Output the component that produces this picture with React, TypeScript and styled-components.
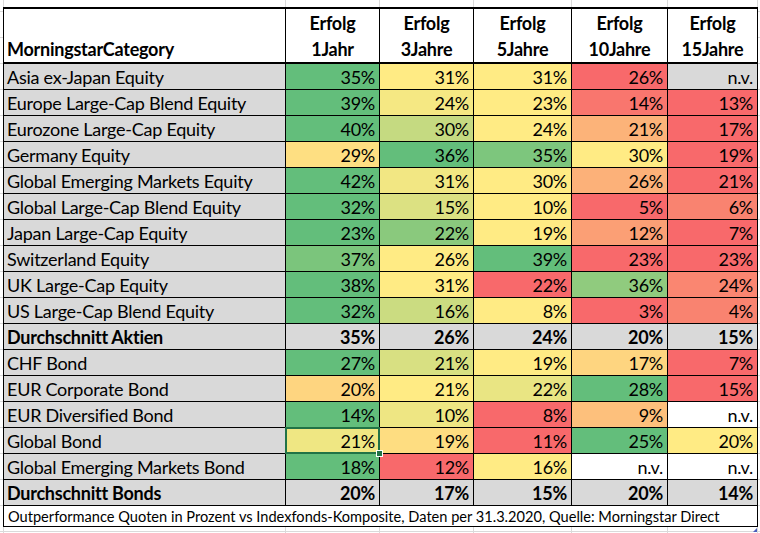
import styled, { createGlobalStyle } from 'styled-components';

const GlobalStyle = createGlobalStyle`
  html, body {
    margin: 0;
    padding: 0;
    background: #fff;
  }
  body {
    font-family: Lato, 'Open Sans', sans-serif;
    color: #000;
  }
`;

type Row = {
  name: string;
  values: (number | null)[];
  // unrounded values where the rounding changes the colour noticeably
  exact?: (number | null)[];
  avg?: boolean;
  grayNa?: boolean;
};

const rows: Row[] = [
  { name: 'Asia ex-Japan Equity', values: [35, 31, 31, 26, null], grayNa: true },
  { name: 'Europe Large-Cap Blend Equity', values: [39, 24, 23, 14, 13] },
  { name: 'Eurozone Large-Cap Equity', values: [40, 30, 24, 21, 17] },
  { name: 'Germany Equity', values: [29, 36, 35, 30, 19] },
  { name: 'Global Emerging Markets Equity', values: [42, 31, 30, 26, 21] },
  { name: 'Global Large-Cap Blend Equity', values: [32, 15, 10, 5, 6] },
  { name: 'Japan Large-Cap Equity', values: [23, 22, 19, 12, 7] },
  { name: 'Switzerland Equity', values: [37, 26, 39, 23, 23] },
  { name: 'UK Large-Cap Equity', values: [38, 31, 22, 36, 24] },
  { name: 'US Large-Cap Blend Equity', values: [32, 16, 8, 3, 4] },
  { name: 'Durchschnitt Aktien', values: [35, 26, 24, 20, 15], avg: true },
  { name: 'CHF Bond', values: [27, 21, 19, 17, 7] },
  { name: 'EUR Corporate Bond', values: [20, 21, 22, 28, 15] },
  { name: 'EUR Diversified Bond', values: [14, 10, 8, 9, null] },
  { name: 'Global Bond', values: [21, 19, 11, 25, 20], exact: [20.5, 19, 11, 25, 20] },
  { name: 'Global Emerging Markets Bond', values: [18, 12, 16, null, null] },
  { name: 'Durchschnitt Bonds', values: [20, 17, 15, 20, 14], avg: true },
];

const periods = ['1Jahr', '3Jahre', '5Jahre', '10Jahre', '15Jahre'];

// excel 3-color scale: min red, 50th percentile yellow, max green
const RED = [248, 105, 107];
const YELLOW = [255, 235, 132];
const GREEN = [99, 190, 123];

function mix(a: number[], b: number[], t: number) {
  const c = a.map((v, i) => Math.round(v + (b[i] - v) * t));
  return `rgb(${c[0]}, ${c[1]}, ${c[2]})`;
}

function median(list: number[]) {
  const s = [...list].sort((a, b) => a - b);
  const m = Math.floor(s.length / 2);
  return s.length % 2 ? s[m] : (s[m - 1] + s[m]) / 2;
}

function scaleColor(v: number, all: number[]) {
  const min = Math.min(...all);
  const max = Math.max(...all);
  const mid = median(all);
  if (v <= mid) {
    return mix(RED, YELLOW, mid === min ? 1 : (v - min) / (mid - min));
  }
  return mix(YELLOW, GREEN, max === mid ? 1 : (v - mid) / (max - mid));
}

function App() {
  return (
    <Sheet>
      <GlobalStyle />
      <Grid>
        <CategoryHead>MorningstarCategory</CategoryHead>
        {periods.map((p) => (
          <HeadCell key={p}>
            <span>Erfolg</span>
            <span>{p}</span>
          </HeadCell>
        ))}
        {rows.map((row) => {
          const src = row.exact || row.values;
          const nums = src.filter((v): v is number => v !== null);
          return [
            <NameCell key={row.name} $bold={row.avg}>
              {row.name}
            </NameCell>,
            ...row.values.map((v, i) => {
              let bg = '#fff';
              const x = src[i];
              if (row.avg) bg = '#d9d9d9';
              else if (x === null) bg = row.grayNa ? '#d9d9d9' : '#fff';
              else bg = scaleColor(x, nums);
              return (
                <ValueCell
                  key={row.name + i}
                  $bg={bg}
                  $bold={row.avg}
                  $selected={row.name === 'Global Bond' && i === 0}
                >
                  {v === null ? 'n.v.' : `${v}%`}
                </ValueCell>
              );
            }),
          ];
        })}
        <Footer>
          Outperformance Quoten in Prozent vs Indexfonds-Komposite, Daten per 31.3.2020, Quelle:
          Morningstar Direct
        </Footer>
      </Grid>
      <ResizeHandle />
    </Sheet>
  );
}

export default App;

const Sheet = styled.div`
  position: relative;
  width: 760px;
  height: 533px;
  box-sizing: border-box;
  padding: 7px 0 0 3px;
  overflow: hidden;
  background-color: #fff;
  background-image: linear-gradient(
      to right,
      transparent 3px,
      #dadada 3px,
      #dadada 4px,
      transparent 4px,
      transparent 285px,
      #dadada 285px,
      #dadada 286px,
      transparent 286px,
      transparent 379px,
      #dadada 379px,
      #dadada 380px,
      transparent 380px,
      transparent 473px,
      #dadada 473px,
      #dadada 474px,
      transparent 474px,
      transparent 571px,
      #dadada 571px,
      #dadada 572px,
      transparent 572px,
      transparent 667px,
      #dadada 667px,
      #dadada 668px,
      transparent 668px,
      transparent 757px,
      #dadada 757px,
      #dadada 758px,
      transparent 758px
    ),
    repeating-linear-gradient(to bottom, #dadada 0 1px, transparent 1px 26px);
  background-position: 0 0, 0 11px;
`;

const Grid = styled.div`
  display: grid;
  grid-template-columns: 282px 94px 94px 98px 96px 90px;
  width: max-content;
  border-left: 1px solid #000;
  border-top: 2px solid #000;
  background: #fff;
  font-size: 18px;
  letter-spacing: -0.25px;
`;

const Cell = styled.div`
  box-sizing: border-box;
  border-right: 1px solid #000;
  border-bottom: 1px solid #000;
  height: 26px;
  display: flex;
  align-items: flex-end;
  white-space: nowrap;
  line-height: 22px;
  padding-bottom: 1px;
`;

const HeadCell = styled(Cell)`
  height: 55px;
  border-bottom-width: 2px;
  flex-direction: column;
  justify-content: flex-end;
  align-items: center;
  font-weight: 700;
  line-height: 26px;
  padding-bottom: 0;
  background: #fff;
`;

const CategoryHead = styled(HeadCell)`
  align-items: flex-start;
  padding-left: 3px;
`;

const NameCell = styled(Cell)<{ $bold?: boolean }>`
  background: #d9d9d9;
  padding-left: 3px;
  font-weight: ${(p) => (p.$bold ? 700 : 400)};
`;

const ValueCell = styled(Cell)<{ $bg: string; $bold?: boolean; $selected?: boolean }>`
  position: relative;
  justify-content: flex-end;
  padding-right: 4px;
  background: ${(p) => p.$bg};
  font-weight: ${(p) => (p.$bold ? 700 : 400)};

  ${(p) =>
    p.$selected &&
    `
    &::before {
      content: '';
      position: absolute;
      left: -1px;
      top: -1px;
      right: -1px;
      bottom: -1px;
      border: 2px solid #217346;
      z-index: 2;
    }
    &::after {
      content: '';
      position: absolute;
      right: -4px;
      bottom: -4px;
      width: 5px;
      height: 5px;
      background: #217346;
      border: 1px solid #fff;
      z-index: 3;
    }
  `}
`;

const Footer = styled(Cell)`
  grid-column: 1 / -1;
  height: 21px;
  font-size: 14.6px;
  letter-spacing: 0;
  line-height: 18px;
  padding-left: 4px;
  padding-bottom: 0;
  background: #fff;
`;

const ResizeHandle = styled.div`
  position: absolute;
  left: 753px;
  top: 528px;
  width: 0;
  height: 0;
  border-left: 4px solid transparent;
  border-bottom: 4px solid #4a5ebc;
`;
